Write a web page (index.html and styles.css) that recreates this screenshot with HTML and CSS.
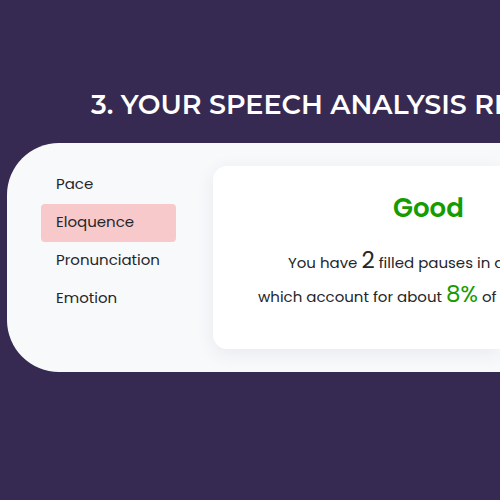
FILE: index.html
```html
<!DOCTYPE html>
<html lang="en">
<head>
<meta charset="utf-8">
<meta name="viewport" content="width=device-width, initial-scale=1">
<title>Speech analysis</title>
<link rel="stylesheet" href="styles.css">
</head>
<body>
<main class="page">
  <h1 class="title">3. YOUR SPEECH ANALYSIS RE</h1>
  <section class="panel">
    <nav class="tabs" aria-label="Analysis">
      <a class="tab" href="#pace">Pace</a>
      <a class="tab tab-active" href="#eloquence" aria-current="page">Eloquence</a>
      <a class="tab" href="#pronunciation">Pronunciation</a>
      <a class="tab" href="#emotion">Emotion</a>
    </nav>
    <article class="card">
      <h2 class="rating">Good</h2>
      <div class="summary">
        <p class="line line-first">You have <span class="figure">2</span> filled pauses in a</p>
        <p class="line">which account for about <span class="figure figure-good">8%</span> of</p>
      </div>
    </article>
  </section>
</main>
</body>
</html>
```
FILE: styles.css
```css
* {
  box-sizing: border-box;
}

body {
  margin: 0;
  min-height: 100vh;
  overflow-x: hidden;
  background: #362952;
  color: #24262b;
  font-family: Poppins, Inter, sans-serif;
  font-size: 15px;
}

h1, h2, p {
  margin: 0;
}

.page {
  padding: 89px 0 0 7px;
  overflow: hidden;
}

.title {
  padding-left: 84px;
  color: #fff;
  font-family: Montserrat, Inter, sans-serif;
  font-size: 27px;
  font-weight: 600;
  line-height: 32px;
  white-space: nowrap;
}

.panel {
  display: flex;
  gap: 37px;
  margin-top: 22px;
  padding: 23px 0 23px 34px;
  border-radius: 52px 0 0 52px;
  background: #f8f9fb;
}

.tabs {
  display: flex;
  flex: none;
  flex-direction: column;
  width: 135px;
}

.tab {
  padding: 0 15px 2px;
  border-radius: 4px;
  color: inherit;
  line-height: 36px;
  text-decoration: none;
}

.tab-active {
  background: #f8c9ca;
}

.card {
  flex: 1;
  min-width: 0;
  padding: 22px 0 35px 45px;
  border-radius: 14px 0 0 14px;
  background: #fff;
  box-shadow: 0 4px 18px rgba(40, 50, 80, 0.08);
}

.rating {
  padding-left: 135px;
  color: #169b00;
  font-size: 26px;
  font-weight: 600;
  line-height: 40px;
}

.summary {
  padding-top: 18px;
}

.line {
  line-height: 34px;
  white-space: nowrap;
}

.line-first {
  padding-left: 30px;
}

.figure {
  font-size: 23px;
  line-height: 24px;
}

.figure-good {
  color: #169b00;
}
```
